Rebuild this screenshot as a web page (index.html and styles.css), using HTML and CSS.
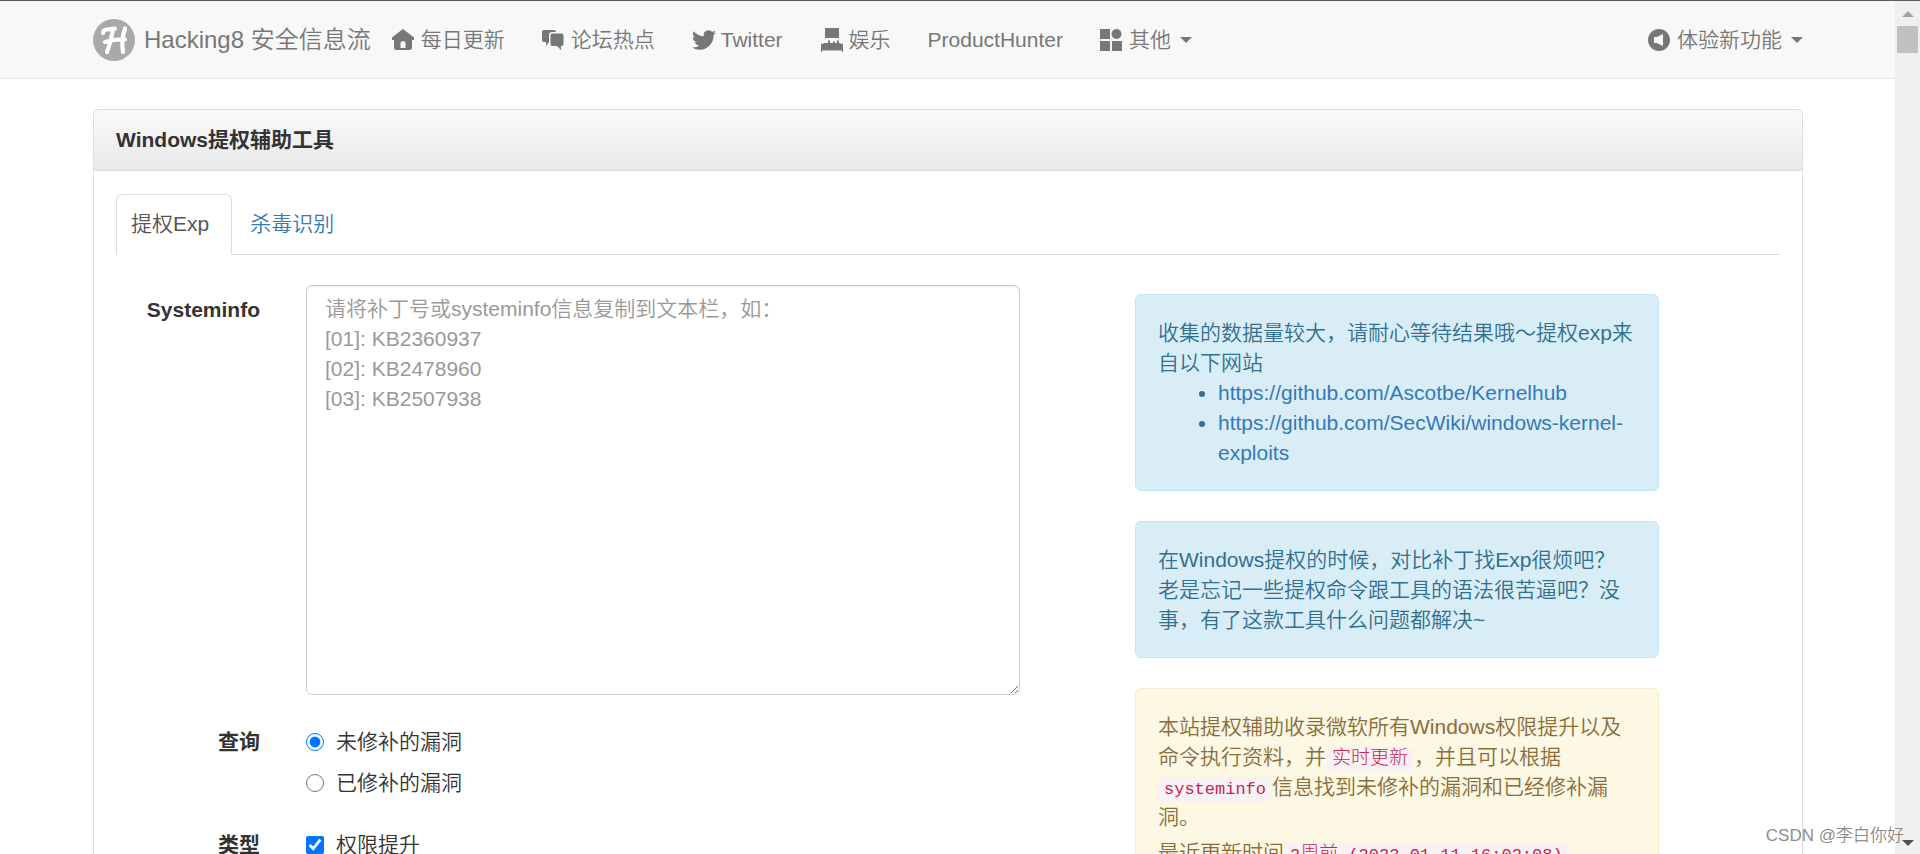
FILE: index.html
```html
<!DOCTYPE html>
<html lang="zh-CN">
<head>
<meta charset="utf-8">
<title>Windows提权辅助工具 - Hacking8 安全信息流</title>
<link rel="stylesheet" href="styles.css">
</head>
<body>
<div class="page">
  <header class="navbar">
    <a class="brand" href="#">
      <svg class="logo" viewBox="0 0 42 42" aria-hidden="true"><circle cx="21" cy="21" r="21" fill="#a9a9a9"/><path d="M10 14Q10 11 14 10.500T22 9.500M20 10Q18.500 22 14 33M32 9.500Q28 21 30 33M12 23Q22 20 32 20.500" fill="none" stroke="#fff" stroke-width="4.200" stroke-linecap="round"/></svg>
      <span>Hacking8 安全信息流</span>
    </a>
    <nav class="menu">
      <a href="#"><svg class="icon" viewBox="0 0 22 22"><path d="M11 0 22 8.500V11H20V18.500Q20 21 17.500 21H4.500Q2 21 2 18.500V11H0V8.500ZM8.500 19H13.500V14.500Q13.500 12 11 12T8.500 14.500Z" fill-rule="evenodd"/></svg>每日更新</a>
      <a href="#"><svg class="icon" viewBox="0 0 22 22"><path d="M2 1H12Q14 1 14 3H10Q7 3 7 6V13L4 17V13H2Q0 13 0 11V3Q0 1 2 1ZM10 4.500H19.500Q21.500 4.500 21.500 6.500V15Q21.500 17 19.500 17H19V21L15 17H10.500Q8.500 17 8.500 15V6.500Q8.500 4.500 10 4.500Z"/></svg>论坛热点</a>
      <a href="#"><svg class="icon wide" viewBox="0 0 24 24"><path d="M23.950 4.570a10 10 0 0 1-2.820.77 4.960 4.960 0 0 0 2.160-2.720c-.95.560-2 .960-3.130 1.180a4.920 4.920 0 0 0-8.380 4.480C7.690 8.100 4.070 6.130 1.640 3.160a4.820 4.820 0 0 0-.67 2.480c0 1.710.87 3.210 2.190 4.100a4.900 4.900 0 0 1-2.230-.62v.06a4.920 4.920 0 0 0 3.950 4.830 5 5 0 0 1-2.210.08 4.940 4.940 0 0 0 4.600 3.420A9.870 9.870 0 0 1 0 19.540a14 14 0 0 0 7.550 2.210c9.050 0 14-7.500 14-13.980 0-.21 0-.42-.02-.63a9.940 9.940 0 0 0 2.460-2.550z"/></svg>Twitter</a>
      <a href="#"><svg class="icon wide" viewBox="0 0 24 24"><path d="M5 0H19V10H5ZM8 12.500H10V15H13V13.500H15V15H17V12.500H19V15L23 16V24H22V22.500H2V24H1V16L5 15H8Z"/></svg>娱乐</a>
      <a href="#">ProductHunter</a>
      <a href="#"><svg class="icon" viewBox="0 0 22 22"><path d="M0 0H10V10H0ZM0 12H10V22H0ZM12 12H22V22H12Z"/><circle cx="16.500" cy="5" r="5"/></svg>其他<span class="caret"></span></a>
    </nav>
    <nav class="menu menu-right">
      <a href="#"><svg class="icon" viewBox="0 0 22 22"><circle cx="11" cy="11" r="11"/><path d="M6 8H9L15 5V17L9 14H6Z" fill="#f8f8f8"/></svg>体验新功能<span class="caret"></span></a>
    </nav>
  </header>

  <main class="panel">
    <h1 class="panel-heading">Windows提权辅助工具</h1>
    <div class="panel-body">
      <nav class="tabs">
        <a class="tab active" href="#">提权Exp</a>
        <a class="tab" href="#">杀毒识别</a>
      </nav>
      <div class="columns">
        <form class="form">
          <label class="form-label" for="info">Systeminfo</label>
          <textarea id="info" class="info" placeholder="请将补丁号或systeminfo信息复制到文本栏，如：&#10;[01]: KB2360937&#10;[02]: KB2478960&#10;[03]: KB2507938"></textarea>
          <span class="form-label">查询</span>
          <div class="options">
            <label class="option"><input type="radio" name="query" checked>未修补的漏洞</label>
            <label class="option"><input type="radio" name="query">已修补的漏洞</label>
          </div>
          <span class="form-label">类型</span>
          <div class="options">
            <label class="option"><input type="checkbox" checked>权限提升</label>
          </div>
        </form>
        <aside class="notes">
          <div class="alert info-alert">收集的数据量较大，请耐心等待结果哦～提权exp来自以下网站
            <ul>
              <li><a href="#">https://github.com/Ascotbe/Kernelhub</a></li>
              <li><a href="#">https://github.com/SecWiki/windows-kernel-exploits</a></li>
            </ul>
          </div>
          <div class="alert info-alert"><p>在Windows提权的时候，对比补丁找Exp很烦吧？老是忘记一些提权命令跟工具的语法很苦逼吧？没事，有了这款工具什么问题都解决~</p></div>
          <div class="alert warning-alert">
            <p>本站提权辅助收录微软所有Windows权限提升以及命令执行资料，并<code><span class="han">实时更新</span></code>，并且可以根据<code>systeminfo</code>信息找到未修补的漏洞和已经修补漏洞。</p>
            <p>最近更新时间<code>2<span class="han">周前</span> (2023-01-11 16:02:08)</code></p>
          </div>
        </aside>
      </div>
    </div>
  </main>
</div>
<div class="scrollbar" aria-hidden="true">
  <span class="arrow up"></span>
  <span class="thumb"></span>
  <span class="arrow down"></span>
</div>
<div class="watermark">CSDN @李白你好</div>
</body>
</html>
```

FILE: styles.css
```css
* { box-sizing: border-box; }
body {
  margin: 0;
  display: flex;
  height: 100vh;
  overflow: hidden;
  position: relative;
  border-top: 1px solid #5d5a5d;
  background: #fff;
  color: #333;
  font: 350 21px/30px "Liberation Sans", "Noto Sans CJK SC", sans-serif;
}
a { color: #337ab7; text-decoration: none; }
p { margin: 0 0 6px; }
.page { flex: 1; min-width: 0; }

.navbar {
  display: flex;
  align-items: center;
  height: 78px;
  padding: 0 92px 0 93px;
  background: #f8f8f8;
  border-bottom: 1px solid #e7e7e7;
}
.navbar a { display: flex; align-items: center; color: #777; white-space: nowrap; }
.brand { gap: 9px; font-size: 24px; }
.logo { width: 42px; height: 42px; }
.menu { display: flex; gap: 37px; margin-left: 21px; }
.menu-right { margin-left: auto; }
.icon { width: 22px; height: 22px; margin-right: 7px; fill: #777; }
.icon.wide { width: 24px; height: 24px; margin-right: 5px; }
.caret {
  margin-left: 9px;
  border: 6px solid transparent;
  border-top-color: #777;
  border-bottom: 0;
}

.panel { margin: 30px 92px 0 93px; border: 1px solid #ddd; border-radius: 5px; }
.panel-heading {
  margin: 0;
  padding: 15px 22px;
  font-size: 21px;
  font-weight: 700;
  line-height: 30px;
  border-bottom: 1px solid #ddd;
  border-radius: 4px 4px 0 0;
  background: linear-gradient(#fafafa, #e8e8e8);
}
.panel-body { padding: 23px 22px 0; }
.tabs { display: flex; gap: 3px; border-bottom: 1px solid #ddd; }
.tab {
  margin-bottom: -1px;
  padding: 14px 14px 15px;
  border: 1px solid transparent;
  border-radius: 6px 6px 0 0;
}
.tab.active {
  padding-right: 22px;
  color: #555;
  background: #fff;
  border-color: #ddd #ddd #fff;
}

.columns {
  display: grid;
  grid-template-columns: 904fr 524fr;
  column-gap: 115px;
  padding: 30px 121px 0 0;
  align-items: start;
}
.form {
  display: grid;
  grid-template-columns: 144fr 714fr;
  column-gap: 46px;
  row-gap: 22px;
}
.form-label { padding-top: 10px; font-weight: 700; text-align: right; }
.info {
  width: 100%;
  height: 410px;
  padding: 8px 18px;
  border: 1px solid #ccc;
  border-radius: 6px;
  box-shadow: inset 0 1px 1px rgba(0, 0, 0, .08);
  font: inherit;
  resize: both;
}
.info::placeholder { color: #999; }
.options { display: flex; flex-direction: column; gap: 11px; padding-top: 10px; }
.option { display: flex; align-items: center; gap: 12px; }
.option input { width: 18px; height: 18px; margin: 0; }

.notes { display: grid; gap: 30px; padding-top: 9px; }
.alert { padding: 23px 22px 22px; border: 1px solid; border-radius: 6px; }
.info-alert { color: #31708f; background: #d9edf7; border-color: #bce8f1; }
.warning-alert { color: #8a6d3b; background: #fcf8e3; border-color: #faebcc; }
.alert ul { margin: 0; padding: 0 0 0 60px; }
.info-alert p { margin: 0; }
code {
  padding: 3px 6px;
  color: #c7254e;
  background: #f9f2f4;
  border-radius: 6px;
  font: 17px/22px "Liberation Mono", "Noto Sans CJK SC", monospace;
}
.han { font-size: 19px; font-weight: 300; }

.scrollbar {
  display: flex;
  flex-direction: column;
  align-items: center;
  width: 25px;
  padding: 10px 0 8px;
  background: #f0f0f0;
}
.arrow { border: 6px solid transparent; }
.arrow.up { border-top: 0; border-bottom-color: #a3a3a3; }
.arrow.down { margin-top: auto; border-bottom: 0; border-top-color: #505050; }
.thumb { width: 21px; height: 27px; margin-top: 9px; background: #c1c1c1; }
.watermark {
  position: absolute;
  right: 16px;
  bottom: 3px;
  color: #8c8c8c;
  font-size: 17px;
}
```
